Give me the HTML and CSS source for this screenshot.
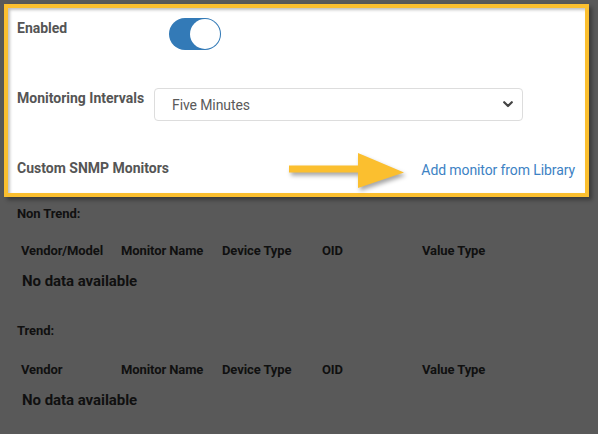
FILE: index.html
```html
<!DOCTYPE html>
<html>
<head>
<meta charset="utf-8">
<link rel="stylesheet" href="styles.css">
</head>
<body>
<div class="page">
  <div class="panel">
    <div class="row row-enabled">
      <div class="label">Enabled</div>
      <div class="toggle"><div class="knob"></div></div>
    </div>
    <div class="row row-interval">
      <div class="label">Monitoring Intervals</div>
      <div class="select">
        <span class="select-text">Five Minutes</span>
        <svg class="chev" width="10" height="7" viewBox="0 0 10 7"><path d="M1.2 1.2 L5 5 L8.8 1.2" fill="none" stroke="#444" stroke-width="2.2" stroke-linecap="round" stroke-linejoin="round"/></svg>
      </div>
    </div>
    <div class="row row-custom">
      <div class="label">Custom SNMP Monitors</div>
      <a class="link">Add monitor from Library</a>
    </div>
    <svg class="arrow" width="124" height="42" viewBox="0 0 124 42">
      <path d="M2 13.5 H71 V1 L117 20.5 L71 36 V20.5 H2 Z" fill="#fbbf2f"/>
    </svg>
  </div>

  <div class="section">
    <div class="section-title">Non Trend:</div>
    <div class="table">
      <div class="th">Vendor/Model</div>
      <div class="th">Monitor Name</div>
      <div class="th">Device Type</div>
      <div class="th">OID</div>
      <div class="th">Value Type</div>
    </div>
    <div class="empty">No data available</div>
  </div>

  <div class="section section-trend">
    <div class="section-title">Trend:</div>
    <div class="table">
      <div class="th">Vendor</div>
      <div class="th">Monitor Name</div>
      <div class="th">Device Type</div>
      <div class="th">OID</div>
      <div class="th">Value Type</div>
    </div>
    <div class="empty">No data available</div>
  </div>
</div>
</body>
</html>
```

FILE: styles.css
```css
html, body {
  margin: 0;
  padding: 0;
  background: #595959;
  width: 598px;
  height: 434px;
  overflow: hidden;
}
.page {
  padding: 4px 0 0 4px;
  font-family: Roboto, "Liberation Sans", sans-serif;
}
.panel {
  position: relative;
  width: 577px;
  height: 185px;
  border: 4px solid #fbbf2f;
  background: #fff;
  box-shadow: inset 2px 2px 3px rgba(0,0,0,0.25), 3px 3px 4px rgba(0,0,0,0.35);
  box-sizing: content-box;
}
.row {
  display: flex;
  align-items: flex-start;
  padding-left: 9px;
  padding-right: 10px;
}
.label {
  font-size: 14px;
  font-weight: 700;
  color: #555;
  line-height: 16px;
}
.row-enabled {
  padding-top: 10px;
}
.row-enabled .label {
  margin-top: 2px;
  width: 152px;
}
.toggle {
  width: 52px;
  height: 32px;
  border-radius: 16px;
  background: #337ab7;
  position: relative;
}
.knob {
  position: absolute;
  right: 1px;
  top: 1px;
  width: 30px;
  height: 30px;
  border-radius: 50%;
  background: #fff;
}
.row-interval {
  margin-top: 38px;
}
.row-interval .label {
  width: 137px;
  margin-top: 2px;
}
.select {
  height: 31px;
  border: 1px solid #ddd;
  border-radius: 4px;
  display: flex;
  align-items: center;
  justify-content: space-between;
  padding: 0 9px 0 17px;
  box-sizing: content-box;
  width: 341px;
}
.select-text {
  font-size: 14px;
  color: #5a5a5a;
  margin-top: 1px;
  letter-spacing: -0.1px;
}
.chev {
  display: block;
}
.row-custom {
  margin-top: 39px;
  justify-content: space-between;
}
.link {
  font-size: 14px;
  color: #3d82c4;
  line-height: 16px;
  margin-top: 2px;
  letter-spacing: -0.1px;
}
.arrow {
  position: absolute;
  left: 279px;
  top: 144px;
  filter: drop-shadow(2px 3px 2px rgba(0,0,0,0.35));
}
.section {
  padding-left: 11px;
  color: #101010;
}
.section-title {
  font-size: 13px;
  font-weight: 700;
  line-height: 15px;
  margin-top: 9px;
  padding-left: 2px;
  letter-spacing: -0.1px;
}
.section-trend .section-title {
  margin-top: 33px;
}
.table {
  display: grid;
  grid-template-columns: 100px 101px 100px 100px 100px;
  padding-left: 6px;
  margin-top: 22px;
}
.section-trend .table {
  margin-top: 24px;
}
.th {
  font-size: 13px;
  font-weight: 700;
  line-height: 15px;
  letter-spacing: -0.1px;
}
.empty {
  padding-left: 7px;
  margin-top: 15px;
  font-size: 15px;
  font-weight: 700;
  line-height: 17px;
  letter-spacing: -0.05px;
}
```
